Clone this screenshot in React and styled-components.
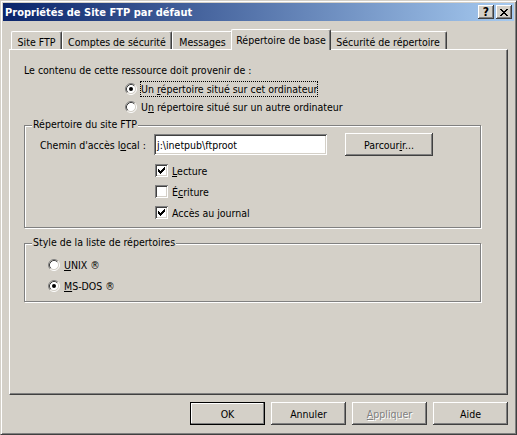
import styled, { createGlobalStyle } from "styled-components";

const GlobalStyle = createGlobalStyle`
  html, body {
    margin: 0;
    padding: 0;
    background: #d4d0c8;
  }
  body {
    font-family: "DejaVu Sans Condensed", "Liberation Sans", Arial, sans-serif;
    font-size: 10.5px;
    color: #000;
  }
  * {
    box-sizing: border-box;
  }
`;

const Window = styled.div`
  width: 517px;
  height: 435px;
  background: #d4d0c8;
  border: 1px solid;
  border-color: #d4d0c8 #404040 #404040 #d4d0c8;
  box-shadow: inset 1px 1px #fff, inset -1px -1px #808080;
  padding: 2px;
  display: flex;
  flex-direction: column;
`;

const TitleBar = styled.div`
  height: 18px;
  display: flex;
  align-items: center;
  padding: 0 2px;
  background: linear-gradient(to right, #0a246a, #a6caf0);
`;

const TitleText = styled.div`
  flex: 1;
  color: #fff;
  font-weight: bold;
  font-size: 11px;
  white-space: nowrap;
`;

const CaptionButton = styled.div`
  width: 16px;
  height: 14px;
  display: flex;
  align-items: center;
  justify-content: center;
  background: #d4d0c8;
  box-shadow: inset -1px -1px #404040, inset 1px 1px #fff,
    inset -2px -2px #808080;
  font-weight: bold;
  font-size: 12px;
  line-height: 14px;
  & + & {
    margin-left: 2px;
  }
`;

const Body = styled.div`
  flex: 1;
  display: flex;
  flex-direction: column;
  padding: 8px 6px 0;
`;

const TabStrip = styled.div`
  height: 20px;
  display: flex;
  align-items: flex-end;
  padding-left: 2px;
  position: relative;
  z-index: 1;
`;

const Tab = styled.div`
  width: ${(p) => p.$w}px;
  height: ${(p) => (p.$active ? 21 : 18)}px;
  margin: ${(p) => (p.$active ? "0 -2px -1px" : "0")};
  position: relative;
  z-index: ${(p) => (p.$active ? 2 : 1)};
  display: flex;
  align-items: center;
  justify-content: center;
  padding-top: ${(p) => (p.$active ? 0 : 2)}px;
  background: #d4d0c8;
  border-top: 1px solid #fff;
  border-left: 1px solid #fff;
  border-right: 1px solid #404040;
  border-radius: 2px 2px 0 0;
  box-shadow: inset -1px 0 #808080;
  white-space: nowrap;
`;

const Panel = styled.div`
  height: 346px;
  border: 1px solid;
  border-color: #fff #404040 #404040 #fff;
  box-shadow: inset -1px -1px #808080;
  padding: 14px 0 0 14px;
  display: flex;
  flex-direction: column;
  align-items: flex-start;
`;

const Heading = styled.div`
  line-height: 13px;
  white-space: nowrap;
`;

const OptionList = styled.div`
  display: flex;
  flex-direction: column;
  margin-top: ${(p) => p.$top || 0}px;
  padding-left: ${(p) => p.$indent || 0}px;
`;

const OptionRow = styled.div`
  height: ${(p) => p.$h}px;
  display: flex;
  align-items: center;
  gap: ${(p) => p.$gap || 3}px;
  white-space: nowrap;
`;

const OptionLabel = styled.span`
  line-height: 14px;
  border: 1px ${(p) => (p.$focused ? "dotted #000" : "solid transparent")};
`;

const Key = styled.span`
  text-decoration: underline;
  text-underline-offset: 1px;
`;

const GroupBox = styled.div`
  position: relative;
  width: 457px;
  height: ${(p) => p.$h}px;
  margin-top: ${(p) => p.$top}px;
  border: 1px solid #808080;
  box-shadow: inset 1px 1px #fff, 1px 1px #fff;
  padding: ${(p) => p.$pad};
`;

const Legend = styled.div`
  position: absolute;
  top: -8px;
  left: 7px;
  padding: 0 1px;
  line-height: 13px;
  background: #d4d0c8;
  white-space: nowrap;
`;

const PathRow = styled.div`
  height: 23px;
  display: flex;
  align-items: center;
`;

const FieldLabel = styled.div`
  width: 114px;
  white-space: nowrap;
`;

const TextInput = styled.div`
  width: 173px;
  height: 21px;
  background: #fff;
  display: flex;
  align-items: center;
  padding-left: 3px;
  box-shadow: inset 1px 1px #808080, inset -1px -1px #fff,
    inset 2px 2px #404040, inset -2px -2px #d4d0c8;
`;

const Button = styled.div`
  width: ${(p) => p.$w || 75}px;
  height: 23px;
  margin-left: ${(p) => p.$ml || 0}px;
  display: flex;
  align-items: center;
  justify-content: center;
  background: #d4d0c8;
  color: ${(p) => (p.$disabled ? "#808080" : "#000")};
  text-shadow: ${(p) => (p.$disabled ? "1px 1px #fff" : "none")};
  box-shadow: ${(p) =>
    p.$default
      ? "inset -1px -1px #000, inset 1px 1px #000, inset -2px -2px #808080, inset 2px 2px #fff"
      : "inset -1px -1px #404040, inset 1px 1px #fff, inset -2px -2px #808080"};
  white-space: nowrap;
`;

const ButtonRow = styled.div`
  margin-top: 7px;
  display: flex;
  justify-content: flex-end;
  gap: 6px;
`;

const CheckBox = styled.div`
  width: 13px;
  height: 13px;
  flex: none;
  background: #fff;
  box-shadow: inset 1px 1px #808080, inset -1px -1px #fff,
    inset 2px 2px #404040, inset -2px -2px #d4d0c8;
`;

function Radio({ checked }) {
  return (
    <svg width="12" height="12" viewBox="0 0 12 12" style={{ flex: "none" }}>
      <circle cx="6" cy="6" r="4.5" fill="#fff" />
      <path d="M2.11 9.89A5.5 5.5 0 0 1 9.89 2.11" fill="none" stroke="#808080" />
      <path d="M9.89 2.11A5.5 5.5 0 0 1 2.11 9.89" fill="none" stroke="#fff" />
      <path d="M2.82 9.18A4.5 4.5 0 0 1 9.18 2.82" fill="none" stroke="#404040" />
      <path d="M9.18 2.82A4.5 4.5 0 0 1 2.82 9.18" fill="none" stroke="#d4d0c8" />
      {checked && <circle cx="6" cy="6" r="2" fill="#000" />}
    </svg>
  );
}

function Check({ checked }) {
  return (
    <CheckBox>
      {checked && (
        <svg width="13" height="13" viewBox="0 0 13 13" shapeRendering="crispEdges">
          <path
            d="M9 3h1v1h-1z M8 4h2v1h-2z M3 5h1v1h-1z M7 5h3v1h-3z M3 6h2v1h-2z M6 6h3v1h-3z M3 7h5v1h-5z M4 8h3v1h-3z M5 9h1v1h-1z"
            fill="#000"
          />
        </svg>
      )}
    </CheckBox>
  );
}

const tabs = [
  { label: "Site FTP", w: 51 },
  { label: "Comptes de sécurité", w: 110 },
  { label: "Messages", w: 61 },
  { label: "Répertoire de base", w: 100, active: true },
  { label: "Sécurité de répertoire", w: 118 },
];

export default function App() {
  return (
    <>
      <GlobalStyle />
      <Window>
        <TitleBar>
          <TitleText>Propriétés de Site FTP par défaut</TitleText>
          <CaptionButton>?</CaptionButton>
          <CaptionButton>
            <svg width="8" height="7" viewBox="0 0 8 7" shapeRendering="crispEdges">
              <path
                d="M0 0h2v1h-2z M6 0h2v1h-2z M1 1h2v1h-2z M5 1h2v1h-2z M2 2h4v1h-4z M3 3h2v1h-2z M2 4h4v1h-4z M1 5h2v1h-2z M5 5h2v1h-2z M0 6h2v1h-2z M6 6h2v1h-2z"
                fill="#000"
              />
            </svg>
          </CaptionButton>
        </TitleBar>

        <Body>
          <TabStrip>
            {tabs.map((t) => (
              <Tab key={t.label} $w={t.w} $active={t.active}>
                {t.label}
              </Tab>
            ))}
          </TabStrip>

          <Panel>
            <Heading>Le contenu de cette ressource doit provenir de :</Heading>
            <OptionList $top={3} $indent={101}>
              <OptionRow $h={18}>
                <Radio checked />
                <OptionLabel $focused>
                  Un <Key>r</Key>épertoire situé sur cet ordinateur
                </OptionLabel>
              </OptionRow>
              <OptionRow $h={18}>
                <Radio />
                <OptionLabel>
                  U<Key>n</Key> répertoire situé sur un autre ordinateur
                </OptionLabel>
              </OptionRow>
            </OptionList>

            <GroupBox $top={9} $h={103} $pad="7px 0 0 15px">
              <Legend>Répertoire du site FTP</Legend>
              <PathRow>
                <FieldLabel>
                  Chemin d'accès l<Key>o</Key>cal :
                </FieldLabel>
                <TextInput>j:\inetpub\ftproot</TextInput>
                <Button $w={88} $ml={18}>
                  Parcour<Key>i</Key>r...
                </Button>
              </PathRow>
              <OptionList $top={4} $indent={115}>
                <OptionRow $h={21} $gap={4}>
                  <Check checked />
                  <span>
                    <Key>L</Key>ecture
                  </span>
                </OptionRow>
                <OptionRow $h={21} $gap={4}>
                  <Check />
                  <span>
                    É<Key>c</Key>riture
                  </span>
                </OptionRow>
                <OptionRow $h={21} $gap={4}>
                  <Check checked />
                  <span>
                    Accès au <Key>j</Key>ournal
                  </span>
                </OptionRow>
              </OptionList>
            </GroupBox>

            <GroupBox $top={15} $h={59} $pad="10px 0 0 23px">
              <Legend>Style de la liste de répertoires</Legend>
              <OptionList>
                <OptionRow $h={21}>
                  <Radio />
                  <OptionLabel>
                    <Key>U</Key>NIX ®
                  </OptionLabel>
                </OptionRow>
                <OptionRow $h={21}>
                  <Radio checked />
                  <OptionLabel>
                    <Key>M</Key>S-DOS ®
                  </OptionLabel>
                </OptionRow>
              </OptionList>
            </GroupBox>
          </Panel>

          <ButtonRow>
            <Button $default>OK</Button>
            <Button>Annuler</Button>
            <Button $disabled>
              <Key>A</Key>ppliquer
            </Button>
            <Button>Aide</Button>
          </ButtonRow>
        </Body>
      </Window>
    </>
  );
}
